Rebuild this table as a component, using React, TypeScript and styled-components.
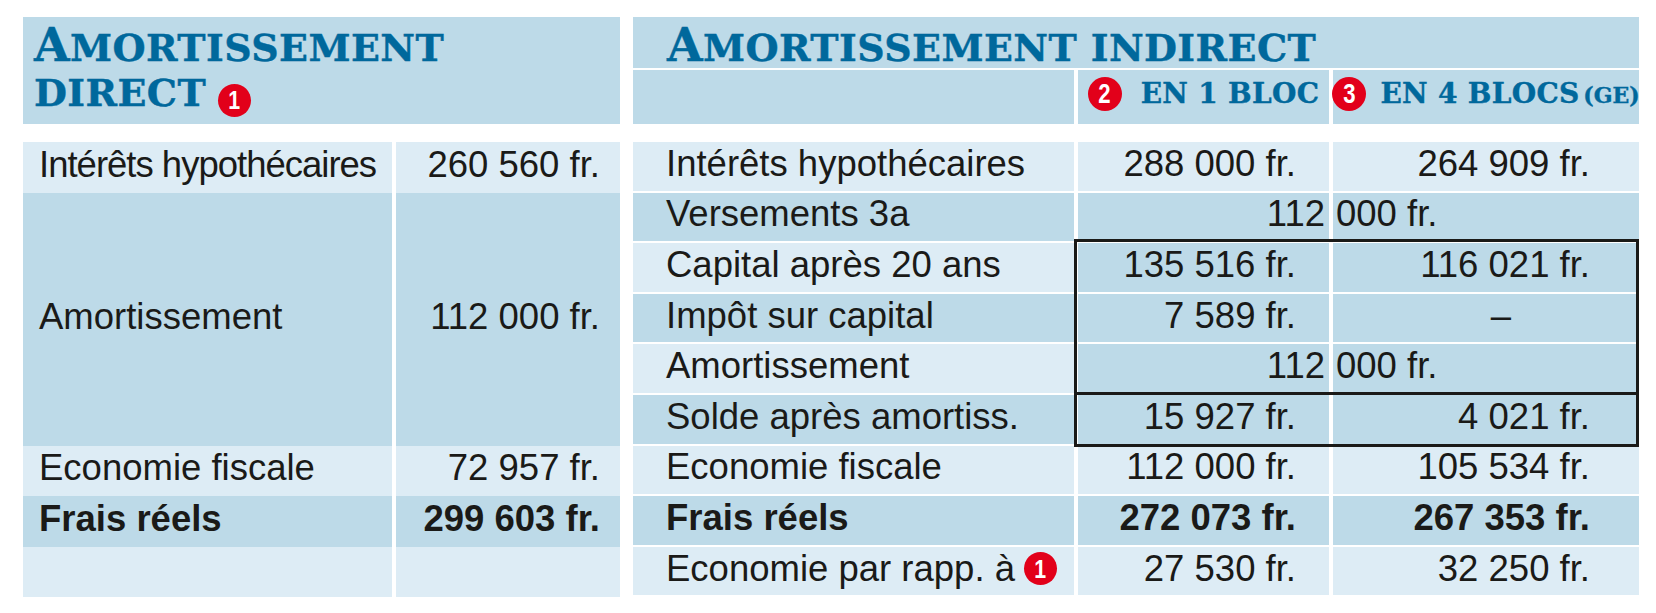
import React from "react";
import styled, { createGlobalStyle } from "styled-components";

type Tone = "light" | "dark";

const colors = {
  dark: "#bddae8",
  light: "#ddecf5",
  blue: "#00689c",
  red: "#e2001a",
  ink: "#1a1a18",
};

const GlobalStyle = createGlobalStyle`
  html, body {
    margin: 0;
    padding: 0;
    background: #ffffff;
  }
  body {
    font-family: "Liberation Sans", Arial, sans-serif;
    color: ${colors.ink};
    overflow: hidden;
  }
`;

const Page = styled.div`
  display: flex;
  align-items: flex-start;
  gap: 13px;
  width: 1656px;
  height: 613px;
  padding: 17px 0 0 23px;
  box-sizing: border-box;
`;

const Table = styled.section`
  display: flex;
  flex-direction: column;
  gap: 18px;
`;

const LeftHeader = styled.div`
  height: 107px;
  padding: 6px 0 0 11px;
  box-sizing: border-box;
  background: ${colors.dark};
`;

const HeaderGrid = styled.div`
  display: grid;
  grid-template-columns: 441px 251px 306px;
  grid-template-rows: 51px 54px;
  column-gap: 4px;
  row-gap: 2px;
`;

const TitleRow = styled.div`
  grid-column: 1 / -1;
  padding: 6px 0 0 34px;
  box-sizing: border-box;
  background: ${colors.dark};
`;

const Title = styled.h2`
  margin: 0;
  font-family: "DejaVu Serif", "Liberation Serif", serif;
  font-weight: 700;
  font-size: 38px;
  line-height: 45px;
  letter-spacing: 0.4px;
  text-transform: uppercase;
  color: ${colors.blue};
  white-space: nowrap;
  -webkit-text-stroke: 0.4px ${colors.blue};
`;

const Initial = styled.span`
  font-size: 46px;
`;

const SubHead = styled.div<{ $gap?: number }>`
  display: flex;
  align-items: center;
  justify-content: center;
  gap: ${(p) => p.$gap ?? 18}px;
  padding-bottom: 6px;
  box-sizing: border-box;
  background: ${colors.dark};
`;

const SubHeadText = styled.span`
  font-family: "DejaVu Serif", "Liberation Serif", serif;
  font-weight: 700;
  font-size: 28px;
  line-height: 28px;
  letter-spacing: 0.3px;
  text-transform: uppercase;
  color: ${colors.blue};
  white-space: nowrap;
  -webkit-text-stroke: 0.4px ${colors.blue};
`;

const Canton = styled.span`
  margin-left: -4px;
  font-size: 22px;
  letter-spacing: 0;
`;

const BadgeCircle = styled.span<{ $size: number; $inline?: boolean }>`
  display: inline-flex;
  align-items: center;
  justify-content: center;
  flex-shrink: 0;
  width: ${(p) => p.$size}px;
  height: ${(p) => p.$size}px;
  border-radius: 50%;
  background: ${colors.red};
  color: #ffffff;
  font-family: "Liberation Sans", Arial, sans-serif;
  font-weight: 700;
  font-size: ${(p) => Math.round(p.$size * 0.8)}px;
  line-height: 1;
  letter-spacing: 0;
  -webkit-text-stroke: 0;
  vertical-align: ${(p) => (p.$inline ? "-3px" : "middle")};
  margin-left: ${(p) => (p.$inline ? "12px" : "0")};
`;

const BadgeDigit = styled.span`
  display: inline-block;
  transform: scaleX(0.82);
`;

const Badge = ({ n, size, inline }: { n: number; size: number; inline?: boolean }) => (
  <BadgeCircle $size={size} $inline={inline}>
    <BadgeDigit>{n}</BadgeDigit>
  </BadgeCircle>
);

const Body = styled.div<{ $cols: string; $row: number; $gap: number }>`
  display: grid;
  grid-template-columns: ${(p) => p.$cols};
  grid-auto-rows: ${(p) => p.$row}px;
  column-gap: 4px;
  row-gap: ${(p) => p.$gap}px;
`;

interface CellProps {
  $tone: Tone;
  $bold?: boolean;
  $end?: boolean;
  $padL?: number;
  $padR?: number;
  $row?: number;
  $col?: number;
  $span?: number;
  $tight?: boolean;
}

const Cell = styled.div<CellProps>`
  display: flex;
  align-items: center;
  justify-content: ${(p) => (p.$end ? "flex-end" : "flex-start")};
  gap: 9px;
  padding: 0 ${(p) => p.$padR ?? 0}px 5px ${(p) => p.$padL ?? 0}px;
  box-sizing: border-box;
  background: ${(p) => colors[p.$tone]};
  font-size: 36.5px;
  line-height: 36px;
  font-weight: ${(p) => (p.$bold ? 700 : 400)};
  letter-spacing: ${(p) => (p.$tight ? "-1px" : "0")};
  white-space: nowrap;
  ${(p) => (p.$row ? `grid-row: ${p.$row} / span ${p.$span ?? 1};` : "")}
  ${(p) => (p.$span && !p.$row ? `grid-row: span ${p.$span};` : "")}
  ${(p) => (p.$col ? `grid-column: ${p.$col};` : "")}
`;

const Frame = styled.div`
  grid-row: 3 / 7;
  grid-column: 2 / 4;
  margin: -4px 0 -3px -4px;
  border: 3px solid ${colors.ink};
  z-index: 1;
  pointer-events: none;
`;

const FrameRule = styled.div`
  grid-row: 6;
  grid-column: 2 / 4;
  margin: -3px 0 0 -4px;
  border-top: 3px solid ${colors.ink};
  z-index: 1;
  pointer-events: none;
`;

type Values =
  | { kind: "pair"; a: string; b: string }
  | { kind: "split"; a: string; b: string }
  | { kind: "dash"; a: string };

interface IndirectRow {
  label: string;
  tone: Tone;
  valueTone?: Tone;
  bold?: boolean;
  badge?: number;
  values: Values;
}

const indirectRows: IndirectRow[] = [
  { label: "Intérêts hypothécaires", tone: "light", values: { kind: "pair", a: "288 000 fr.", b: "264 909 fr." } },
  { label: "Versements 3a", tone: "dark", values: { kind: "split", a: "112", b: "000 fr." } },
  { label: "Capital après 20 ans", tone: "light", valueTone: "dark", values: { kind: "pair", a: "135 516 fr.", b: "116 021 fr." } },
  { label: "Impôt sur capital", tone: "dark", values: { kind: "dash", a: "7 589 fr." } },
  { label: "Amortissement", tone: "light", valueTone: "dark", values: { kind: "split", a: "112", b: "000 fr." } },
  { label: "Solde après amortiss.", tone: "dark", values: { kind: "pair", a: "15 927 fr.", b: "4 021 fr." } },
  { label: "Economie fiscale", tone: "light", values: { kind: "pair", a: "112 000 fr.", b: "105 534 fr." } },
  { label: "Frais réels", tone: "dark", bold: true, values: { kind: "pair", a: "272 073 fr.", b: "267 353 fr." } },
  { label: "Economie par rapp. à", tone: "light", badge: 1, values: { kind: "pair", a: "27 530 fr.", b: "32 250 fr." } },
];

const IndirectValues = ({ row, index }: { row: IndirectRow; index: number }) => {
  const tone = row.valueTone ?? row.tone;
  const r = index + 1;
  const v = row.values;
  if (v.kind === "split") {
    return (
      <>
        <Cell $tone={tone} $row={r} $col={2} $end $padR={4}>
          {v.a}
        </Cell>
        <Cell $tone={tone} $row={r} $col={3} $padL={3}>
          {v.b}
        </Cell>
      </>
    );
  }
  return (
    <>
      <Cell $tone={tone} $row={r} $col={2} $end $padR={33} $bold={row.bold}>
        {v.a}
      </Cell>
      <Cell
        $tone={tone}
        $row={r}
        $col={3}
        $end
        $padR={v.kind === "dash" ? 128 : 49}
        $bold={row.bold}
      >
        {v.kind === "dash" ? "–" : v.b}
      </Cell>
    </>
  );
};

const DirectTable = () => (
  <Table>
    <LeftHeader>
      <Title>
        <Initial>A</Initial>mortissement
        <br />
        direct
        <Badge n={1} size={33} inline />
      </Title>
    </LeftHeader>
    <Body $cols="369px 224px" $row={50.6} $gap={0}>
      <Cell $tone="light" $padL={16} $tight>
        Intérêts hypothécaires
      </Cell>
      <Cell $tone="light" $end $padR={20}>
        260 560 fr.
      </Cell>
      <Cell $tone="dark" $padL={16} $span={5}>
        Amortissement
      </Cell>
      <Cell $tone="dark" $end $padR={20} $span={5}>
        112 000 fr.
      </Cell>
      <Cell $tone="light" $padL={16}>
        Economie fiscale
      </Cell>
      <Cell $tone="light" $end $padR={20}>
        72 957 fr.
      </Cell>
      <Cell $tone="dark" $padL={16} $bold>
        Frais réels
      </Cell>
      <Cell $tone="dark" $end $padR={20} $bold>
        299 603 fr.
      </Cell>
      <Cell $tone="light" />
      <Cell $tone="light" />
    </Body>
  </Table>
);

const IndirectTable = () => (
  <Table>
    <HeaderGrid>
      <TitleRow>
        <Title>
          <Initial>A</Initial>mortissement indirect
        </Title>
      </TitleRow>
      <SubHead />
      <SubHead $gap={19}>
        <Badge n={2} size={34} />
        <SubHeadText>en 1 bloc</SubHeadText>
      </SubHead>
      <SubHead $gap={14}>
        <Badge n={3} size={34} />
        <SubHeadText>
          en 4 blocs<Canton> (GE)</Canton>
        </SubHeadText>
      </SubHead>
    </HeaderGrid>
    <Body $cols="441px 251px 306px" $row={48.6} $gap={2}>
      {indirectRows.map((row, i) => (
        <React.Fragment key={row.label}>
          <Cell $tone={row.tone} $row={i + 1} $col={1} $padL={33} $bold={row.bold}>
            {row.label}
            {row.badge ? <Badge n={row.badge} size={33} /> : null}
          </Cell>
          <IndirectValues row={row} index={i} />
        </React.Fragment>
      ))}
      <Frame />
      <FrameRule />
    </Body>
  </Table>
);

export default function App() {
  return (
    <>
      <GlobalStyle />
      <Page>
        <DirectTable />
        <IndirectTable />
      </Page>
    </>
  );
}
